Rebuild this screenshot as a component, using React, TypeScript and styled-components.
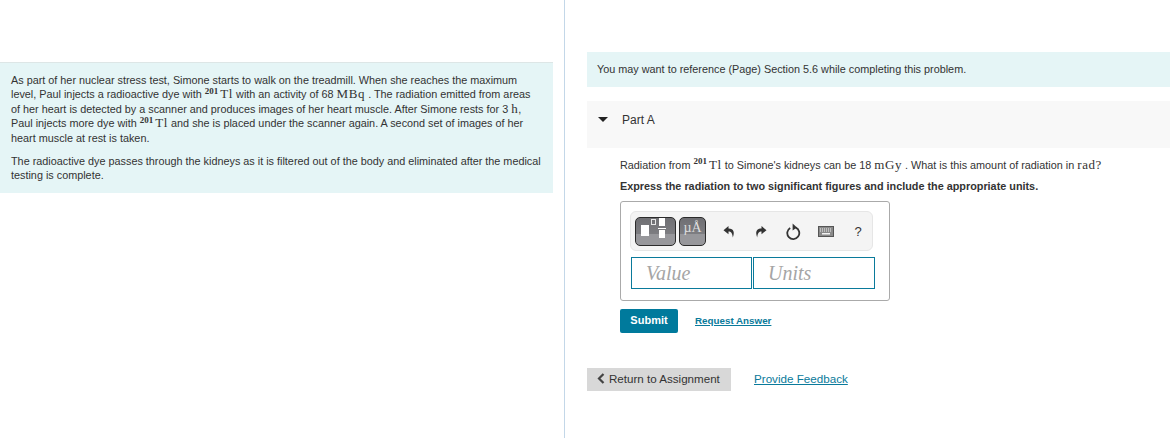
import React, { ReactElement } from 'react'
import styled, { createGlobalStyle } from 'styled-components'

const GlobalStyle = createGlobalStyle`
    html, body {
        margin: 0;
        padding: 0;
        background: #fff;
    }
    body {
        font-family: "Liberation Sans", Arial, sans-serif;
        color: #333;
    }
`
const Page = styled.div`
    display: grid;
    grid-template-columns: 565px 1fr;
    width: 1170px;
    height: 438px;
    overflow: hidden;
`
const LeftColumn = styled.section`
    border-right: 1px solid #c3d7e8;
    padding: 62px 11px 0 0;
`
const Intro = styled.div`
    background: #e5f5f6;
    border-top: 1px solid #dde6e6;
    padding: 10px 0 10px 11px;
    font-size: 10.83px;
    line-height: 14.4px;
    white-space: nowrap;
`
const Para = styled.p`
    margin: 0 0 9px;
    &:last-child {
        margin-bottom: 0;
    }
`
const Math = styled.span`
    font-family: "Liberation Serif", "Times New Roman", serif;
    font-size: 13px;
    letter-spacing: 0.6px;
    line-height: 0;
`
const Sup = styled.sup`
    font-family: "Liberation Serif", "Times New Roman", serif;
    font-size: 9px;
    font-weight: 700;
    line-height: 0;
    margin-right: 2px;
`
const RightColumn = styled.section`
    padding: 52px 0 0 22px;
    display: flex;
    flex-direction: column;
`
const InfoBar = styled.div`
    background: #e5f5f6;
    height: 35px;
    display: flex;
    align-items: center;
    padding: 0 0 2px 10px;
    box-sizing: border-box;
    font-size: 10.83px;
`
const PartHeader = styled.div`
    margin-top: 14px;
    background: #f8f8f8;
    height: 47px;
    display: flex;
    align-items: center;
    padding: 0 0 10px 11px;
    box-sizing: border-box;
    font-size: 12px;
`
const Caret = styled.span`
    width: 0;
    height: 0;
    border-left: 5px solid transparent;
    border-right: 5px solid transparent;
    border-top: 5px solid #222;
    margin-right: 14px;
`
const PartBody = styled.div`
    padding: 10px 0 0 33px;
`
const Question = styled.div`
    font-size: 10.83px;
    line-height: 15px;
`
const Instruction = styled.div`
    font-size: 10.83px;
    font-weight: 700;
    line-height: 14px;
    margin-top: 6px;
`
const EditorBox = styled.div`
    margin-top: 8px;
    width: 270px;
    height: 100px;
    box-sizing: border-box;
    border: 1px solid #aaa;
    border-radius: 3px;
    padding: 9px 0 0 9px;
`
const Toolbar = styled.div`
    width: 243px;
    height: 40px;
    box-sizing: border-box;
    background: #f4f4f4;
    border: 1px solid #e6e6e6;
    border-radius: 6px;
    display: flex;
    align-items: center;
    padding-left: 4px;
`
const ToolButton = styled.div<{ $wide?: boolean }>`
    flex: none;
    width: ${p => (p.$wide ? 41 : 27)}px;
    height: 29px;
    box-sizing: border-box;
    margin-right: 3px;
    border: 1px solid #2b2b2b;
    border-radius: 5px;
    background: linear-gradient(#6f6f73 0, #7d7d81 58%, #97979b 60%, #97979b 100%);
    overflow: hidden;
    display: flex;
    justify-content: center;
    color: #dedede;
    font-family: "Liberation Serif", serif;
    font-size: 14px;
    line-height: 20px;
`
const IconSlot = styled.div`
    flex: none;
    width: 32.25px;
    display: flex;
    justify-content: center;
    align-items: center;
    color: #333;
    font-size: 13px;
`
const IconRow = styled.div`
    flex: none;
    display: flex;
    margin-left: 4px;
`
const Inputs = styled.div`
    display: flex;
    gap: 1px;
    margin: 6px 0 0 1px;
`
const Field = styled.div`
    width: 121px;
    height: 32px;
    box-sizing: border-box;
    border: 1px solid #0a7a9b;
    padding-left: 14px;
    font-family: "Liberation Serif", serif;
    font-style: italic;
    font-size: 20px;
    line-height: 30px;
    color: #a5a5a5;
    & + & {
        width: 122px;
    }
`
const Actions = styled.div`
    display: flex;
    align-items: center;
    margin-top: 8px;
    gap: 17px;
`
const Submit = styled.div`
    width: 58px;
    height: 24px;
    box-sizing: border-box;
    padding-bottom: 2px;
    background: #007a9c;
    border-radius: 2px;
    color: #fff;
    font-size: 11px;
    font-weight: 700;
    display: flex;
    align-items: center;
    justify-content: center;
`
const SmallLink = styled.span`
    color: #0a7a9b;
    font-size: 9.8px;
    font-weight: 700;
    text-decoration: underline;
    padding-bottom: 2px;
`
const Footer = styled.div`
    display: flex;
    align-items: center;
    margin-top: 35px;
    gap: 23px;
`
const ReturnButton = styled.div`
    width: 144px;
    height: 23px;
    background: #d8d8d8;
    font-size: 11.6px;
    display: flex;
    align-items: center;
    padding: 0 0 2px 10px;
    box-sizing: border-box;
    gap: 4px;
`
const FeedbackLink = styled.span`
    color: #0a7a9b;
    font-size: 11.65px;
    text-decoration: underline;
    padding-bottom: 2px;
`

function Tl(): ReactElement {
    return <><Sup>201</Sup><Math>Tl</Math></>
}

function TemplateGlyph(): ReactElement {
    return (
        <svg width="39" height="27" viewBox="0 0 39 27">
            <rect x="5" y="7" width="8" height="11" fill="#fff" />
            <rect x="15.5" y="1.5" width="4" height="5" fill="none" stroke="#e6e6e6" />
            <rect x="23" y="0" width="6" height="8" fill="#fff" />
            <rect x="22" y="10" width="8" height="1" fill="#fff" />
            <rect x="23" y="12" width="6" height="8" fill="#fff" />
        </svg>
    )
}

function Undo({ flip }: { flip?: boolean }): ReactElement {
    return (
        <svg width="12" height="13" viewBox="0 0 12 13" style={flip ? { transform: 'scaleX(-1)' } : undefined}>
            <path d="M5.5 1 L0.5 5.2 L5.5 9.2 V6.6 C8 6.6 9.4 8.2 9.8 12.5 C11.8 7.5 11 3.4 5.5 3.4 Z" fill="#333" />
        </svg>
    )
}

function Reset(): ReactElement {
    return (
        <svg width="15" height="17" viewBox="0 0 15 17">
            <path d="M9.8 4.6 A6 6 0 1 1 4.2 4.9" fill="none" stroke="#333" strokeWidth="1.8" />
            <path d="M6.6 0.5 L11 4.4 L6.6 7.4 Z" fill="#333" />
        </svg>
    )
}

function Keyboard(): ReactElement {
    return (
        <svg width="16" height="11" viewBox="0 0 16 11">
            <rect x="0.5" y="0.5" width="15" height="10" fill="#8a8a8a" stroke="#555" />
            <path d="M2 3h12M2 5h12" stroke="#f2f2f2" strokeWidth="1" strokeDasharray="1 1" />
            <rect x="4" y="7" width="8" height="1.5" fill="#f2f2f2" />
        </svg>
    )
}

export default function App(): ReactElement {
    return (
        <Page>
            <GlobalStyle />
            <LeftColumn>
                <Intro>
                    <Para>
                        As part of her nuclear stress test, Simone starts to walk on the treadmill. When she reaches the maximum<br />
                        level, Paul injects a radioactive dye with <Tl /> with an activity of 68 <Math>MBq</Math> . The radiation emitted from areas<br />
                        of her heart is detected by a scanner and produces images of her heart muscle. After Simone rests for 3 <Math>h</Math>,<br />
                        Paul injects more dye with <Tl /> and she is placed under the scanner again. A second set of images of her<br />
                        heart muscle at rest is taken.
                    </Para>
                    <Para>
                        The radioactive dye passes through the kidneys as it is filtered out of the body and eliminated after the medical<br />
                        testing is complete.
                    </Para>
                </Intro>
            </LeftColumn>
            <RightColumn>
                <InfoBar>You may want to reference (Page) Section 5.6 while completing this problem.</InfoBar>
                <PartHeader><Caret />Part A</PartHeader>
                <PartBody>
                    <Question>
                        Radiation from <Tl /> to Simone's kidneys can be 18 <Math>mGy</Math> . What is this amount of radiation in <Math>rad?</Math>
                    </Question>
                    <Instruction>Express the radiation to two significant figures and include the appropriate units.</Instruction>
                    <EditorBox>
                        <Toolbar>
                            <ToolButton $wide><TemplateGlyph /></ToolButton>
                            <ToolButton>µÅ</ToolButton>
                            <IconRow>
                                <IconSlot><Undo /></IconSlot>
                                <IconSlot><Undo flip /></IconSlot>
                                <IconSlot><Reset /></IconSlot>
                                <IconSlot><Keyboard /></IconSlot>
                                <IconSlot>?</IconSlot>
                            </IconRow>
                        </Toolbar>
                        <Inputs>
                            <Field>Value</Field>
                            <Field>Units</Field>
                        </Inputs>
                    </EditorBox>
                    <Actions>
                        <Submit>Submit</Submit>
                        <SmallLink>Request Answer</SmallLink>
                    </Actions>
                </PartBody>
                <Footer>
                    <ReturnButton>
                        <svg width="8" height="11" viewBox="0 0 8 11">
                            <path d="M6.5 1 L2 5.5 L6.5 10" fill="none" stroke="#444" strokeWidth="2.2" />
                        </svg>
                        Return to Assignment
                    </ReturnButton>
                    <FeedbackLink>Provide Feedback</FeedbackLink>
                </Footer>
            </RightColumn>
        </Page>
    )
}
